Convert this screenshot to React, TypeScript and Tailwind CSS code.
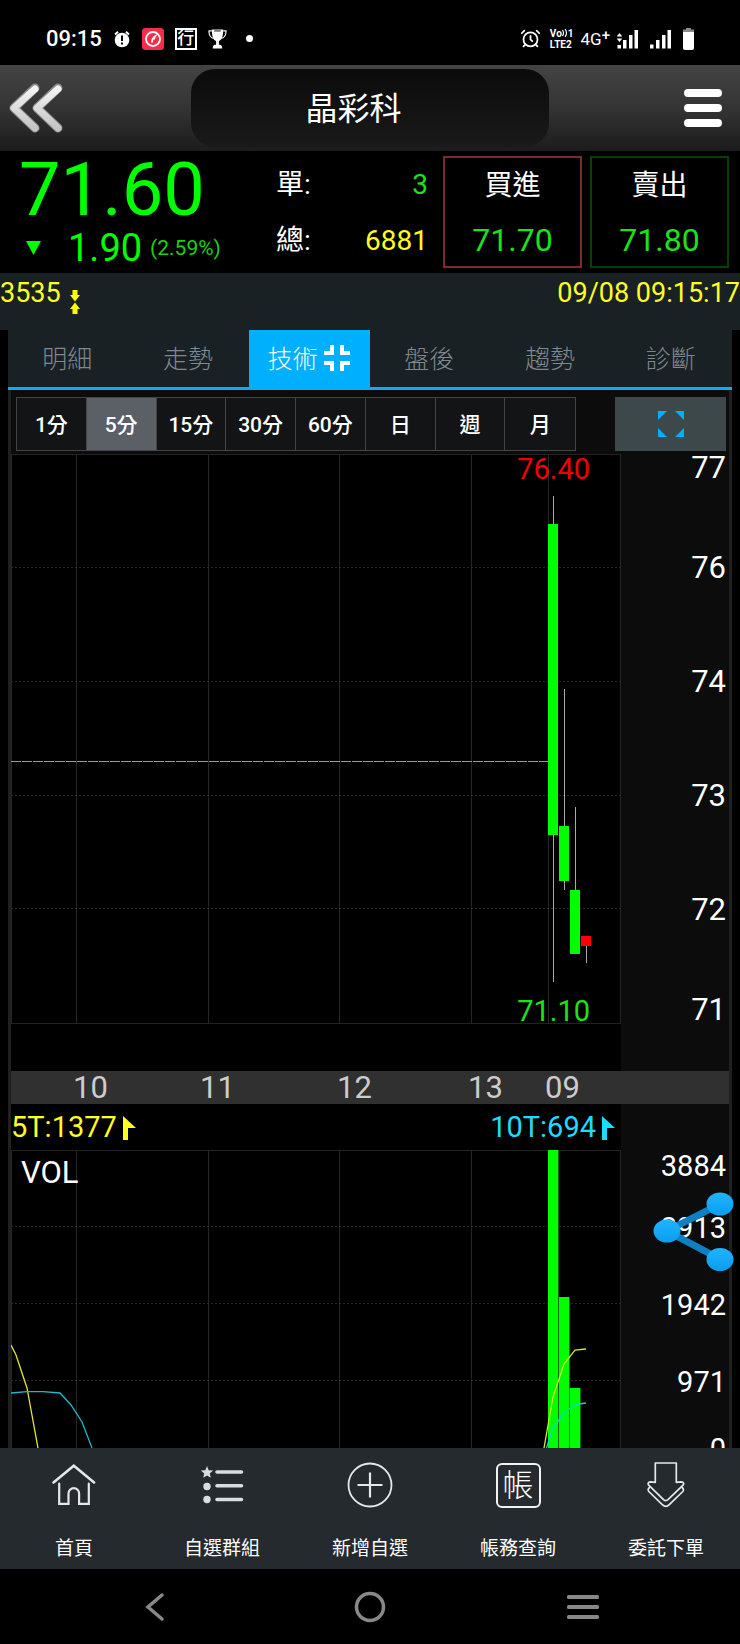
import React from 'react';
import { AlarmClock } from 'lucide-react';

const tabs = ['明細', '走勢', '技術', '盤後', '趨勢', '診斷'];
const periods = ['1分', '5分', '15分', '30分', '60分', '日', '週', '月'];
const hours = ['10', '11', '12', '13', '09'];

interface Candle {
  x: number;
  high: number;
  low: number;
  top: number;
  bottom: number;
  up?: boolean;
}

const candles: Candle[] = [
  { x: 537, high: 42, low: 528, top: 70, bottom: 381 },
  { x: 548, high: 235, low: 436, top: 372, bottom: 427 },
  { x: 559, high: 353, low: 500, top: 436, bottom: 500 },
  { x: 570, high: 482, low: 509, top: 482, bottom: 492, up: true },
];

const volumes = [
  { x: 537, top: 0 },
  { x: 548, top: 147 },
  { x: 559, top: 238 },
];

const GridLines = ({ rows, height, columns }: { rows: number[]; height: number; columns: number[] }) => (
  <g fill="none" strokeWidth="1" shapeRendering="crispEdges">
    {columns.map((x) => (
      <line key={x} x1={x} x2={x} y1="0" y2={height} stroke="#262626" />
    ))}
    {rows.map((y) => (
      <line key={y} x1="0" x2="610" y1={y} y2={y} stroke="#282828" strokeDasharray="2 2" />
    ))}
  </g>
);

const Signal = () => (
  <svg viewBox="0 0 21 20" className="h-5 w-[21px]" fill="#fff">
    <rect x="0" y="15.500" width="3.500" height="4" />
    <rect x="6" y="11" width="3.500" height="8.500" />
    <rect x="12" y="6" width="3.500" height="13.500" />
    <rect x="17.500" y="1" width="3.500" height="18.500" />
  </svg>
);

const StatusBar = () => (
  <div className="flex h-[65px] items-center justify-between bg-black pt-3 pr-[46px] pl-[46px] text-white">
    <div className="flex items-center gap-[11px]">
      <span className="text-[22px] leading-6 font-medium">09:15</span>
      <svg viewBox="0 0 18 18" className="size-[18px]" fill="#fff">
        <circle cx="9" cy="10" r="7.300" />
        <path d="M2 4.500 5 1.800M16 4.500 13 1.800" stroke="#fff" strokeWidth="2" />
        <path d="M9 5.500v5.500M9 12.500v2" stroke="#000" strokeWidth="2" />
      </svg>
      <svg viewBox="0 0 22 22" className="size-[22px]">
        <rect width="22" height="22" rx="3.500" fill="#f72b4a" />
        <circle cx="11" cy="11" r="7" fill="none" stroke="#fff" strokeWidth="1.800" />
        <path d="M10 14.500c0-3 .5-5 3.500-6.500l-2 3.500" fill="none" stroke="#fff" strokeWidth="1.800" />
      </svg>
      <span className="flex size-[22px] items-center justify-center border-2 border-white text-[17px] leading-none font-medium">行</span>
      <svg viewBox="0 0 20 22" className="h-[22px] w-[19px]" fill="#fff">
        <path d="M4 1h12c0 7-1.500 11-4.500 12.200V17h1.500c1.500.6 2 2 2 4H5c0-2 .5-3.400 2-4h1.500v-3.800C5.500 12 4 8 4 1Z" />
        <path d="M4 2.500H1c0 4.500 1.500 7 5 8M16 2.500h3c0 4.500-1.500 7-5 8" fill="none" stroke="#fff" strokeWidth="1.200" />
        <path d="M6.500 2.500h7" stroke="#000" strokeWidth="1" />
      </svg>
      <span className="ml-2 size-[7px] rounded-full bg-white" />
    </div>
    <div className="flex items-center gap-3">
      <div className="flex items-center gap-[7px]">
        <AlarmClock className="mr-[2px] size-[21px]" strokeWidth={2} />
        <div className="flex flex-col text-[10px] leading-[11px] font-bold">
          <span className="flex items-center">
            Vo
            <svg viewBox="0 0 6 10" className="h-[10px] w-[6px]" fill="none" stroke="#fff">
              <path d="M.5 2q2 3 0 6M3 1q3 4 0 8" strokeWidth="1.200" />
            </svg>
            1
          </span>
          <span>LTE2</span>
        </div>
        <span className="flex items-start text-[17px] leading-5">
          4G<span className="text-[15px] leading-3 font-medium">+</span>
        </span>
        <svg viewBox="0 0 21 20" className="h-5 w-[21px]" fill="#fff">
          <path d="m2.500 4 2.800 3.500h-5.600zM2.500 13 -.3 9.500h5.600z" />
          <rect x="0.500" y="16" width="3.500" height="3.500" />
          <rect x="6" y="11" width="3.500" height="8.500" />
          <rect x="12" y="6" width="3.500" height="13.500" />
          <rect x="17.500" y="1" width="3.500" height="18.500" />
        </svg>
      </div>
      <Signal />
      <svg viewBox="0 0 11 22" className="h-[22px] w-[11px]">
        <path d="M3 0h5v1.500h3V5H0V1.500h3z" fill="#8a8a8a" />
        <path d="M0 4h11v16a2 2 0 0 1-2 2H2a2 2 0 0 1-2-2z" fill="#fff" />
      </svg>
    </div>
  </div>
);

const Header = () => (
  <header className="grid h-[86px] grid-cols-[1fr_358px_1fr] items-center bg-linear-to-b from-[#444] via-[#343434] to-[#1c1c1c]">
    <button type="button" aria-label="返回" className="justify-self-start pl-[9px]">
      <svg viewBox="0 0 54 50" className="h-[50px] w-[54px]" fill="none" strokeLinecap="round" strokeLinejoin="round">
        <defs>
          <linearGradient id="back" x1="0" y1="0" x2="0" y2="1">
            <stop offset="0" stopColor="#f4f4f4" />
            <stop offset="1" stopColor="#c4c4c4" />
          </linearGradient>
        </defs>
        <path d="M26 5 5 25l21 20M49 5 28 25l21 20" stroke="#8c8c8c" strokeWidth="9" />
        <path d="M26 6 5 25l21 20M49 6 28 25l21 20" stroke="url(#back)" strokeWidth="7" />
      </svg>
    </button>
    <h1 className="flex h-[78px] items-center justify-center rounded-3xl bg-linear-to-b from-[#0b0b0b] via-[#121212] to-[#1a1a1a] pt-[1px] pr-[33px] text-[32px] text-white">
      晶彩科
    </h1>
    <button type="button" aria-label="選單" className="justify-self-end pr-[18px]">
      <svg viewBox="0 0 38 38" className="size-[38px]" fill="#fff">
        <rect y="0" width="38" height="8" rx="4" />
        <rect y="15" width="38" height="8" rx="4" />
        <rect y="30" width="38" height="8" rx="4" />
      </svg>
    </button>
  </header>
);

const Quote = () => (
  <section className="grid h-[122px] grid-cols-[1fr_152px_154px_147px] bg-black pt-[5px] pr-[11px]">
    <div className="text-[#00ff00]">
      <div className="pl-[19px] text-[74px] leading-[68px]">71.60</div>
      <div className="flex items-center pl-[26px]">
        <svg viewBox="0 0 15 14" className="mr-[27px] h-[14px] w-[15px]" fill="#00ff00">
          <path d="M0 0h15L7.500 14z" />
        </svg>
        <span className="text-[38px] leading-[48px]">1.90</span>
        <span className="ml-2 text-[21px] leading-[44px] text-[#18d018]">(2.59%)</span>
      </div>
    </div>
    <dl className="grid grid-cols-[auto_1fr] grid-rows-[56px_56px] pt-[1px] text-[28px] leading-[56px] text-white">
      <dt>單:</dt>
      <dd className="text-right text-[#1ee01e]">3</dd>
      <dt>總:</dt>
      <dd className="text-right text-[#ffff22]">6881</dd>
    </dl>
    <button type="button" className="flex h-28 w-[139px] flex-col items-center justify-self-end border-2 border-[#7c2c2c] text-white">
      <span className="text-[28px] leading-[56px]">買進</span>
      <span className="text-[32px] leading-[52px] text-[#1ee01e]">71.70</span>
    </button>
    <button type="button" className="flex h-28 w-[139px] flex-col items-center justify-self-end border-2 border-[#064006] text-white">
      <span className="text-[28px] leading-[56px]">賣出</span>
      <span className="text-[32px] leading-[52px] text-[#1ee01e]">71.80</span>
    </button>
  </section>
);

const InfoStrip = () => (
  <div className="flex h-[57px] items-start justify-between bg-[#1a2125] text-[27px] leading-10 text-[#ffff22]">
    <div className="flex gap-[9px]">
      <span>3535</span>
      <svg viewBox="0 0 10 24" className="mt-[17px] h-6 w-[10px]" fill="#ffff00">
        <path d="M2.500 0h5v5H10l-5 6.500L0 5h2.500zM2.500 24h5v-5H10l-5-6.500L0 19h2.500z" />
      </svg>
    </div>
    <time>09/08 09:15:17</time>
  </div>
);

const Tabs = () => (
  <nav className="mx-2 grid grid-cols-6 border-b-[3px] border-[#12aaf0] bg-[#1a2125]">
    {tabs.map((tab) => {
      const active = tab === '技術';
      return (
        <button
          key={tab}
          type="button"
          className={`flex h-[57px] items-center justify-center gap-[6px] pt-[3px] pr-[2px] text-[25px] font-light ${active ? 'bg-[#00b0ff] text-white' : 'text-[#7f898c]'}`}
        >
          {tab}
          {active && (
            <svg viewBox="0 0 26 26" className="mb-1 size-[26px]" fill="none" stroke="#fff" strokeWidth="4">
              <path d="M8 0v8H0M18 0v8h8M8 26v-8H0M18 26v-8h8" />
            </svg>
          )}
        </button>
      );
    })}
  </nav>
);

const Toolbar = () => (
  <div className="flex gap-[39px] bg-[#0c0c0c] pt-[7px] pr-[3px] pb-[3px] pl-[5px]">
    <div className="grid h-[54px] flex-1 grid-cols-8 divide-x divide-[#444] border border-[#444] bg-[#121415]">
      {periods.map((period) => (
        <button
          key={period}
          type="button"
          className={`pt-[3px] text-[21px] font-medium text-white ${period === '5分' ? 'bg-[#5b6067]' : ''}`}
        >
          {period}
        </button>
      ))}
    </div>
    <button type="button" aria-label="全螢幕" className="flex h-[54px] w-[111px] items-center justify-center bg-[#3d484b]">
      <svg viewBox="0 0 26 26" className="size-[26px]" fill="#00b0ff">
        <path d="M0 0h9L0 9zM26 0v9l-9-9zM0 26v-9l9 9zM26 26h-9l9-9z" />
      </svg>
    </button>
  </div>
);

const PriceChart = () => (
  <div className="grid grid-cols-[1fr_108px]">
    <div className="relative bg-black pb-[47px]">
      <svg viewBox="0 0 610 570" preserveAspectRatio="none" className="block h-[570px] w-full">
        <GridLines rows={[113.5, 227.5, 341.5, 454.5]} columns={[0.5, 65.5, 197.5, 328.5, 460.5, 537.5, 609.5]} height={570} />
        <path d="M0 .5h610M0 569.500h610" stroke="#222" />
        <path d="M0 307.500h537" stroke="#999" strokeDasharray="10 1" />
        {candles.map((c) => (
          <g key={c.x}>
            <path d={`M${c.x + 5.5} ${c.high}V${c.low}`} stroke="#aaa" />
            <rect x={c.x} y={c.top} width="10" height={c.bottom - c.top} fill={c.up ? '#ff0000' : '#00ff00'} />
          </g>
        ))}
      </svg>
      <span className="absolute top-0 right-[31px] text-[29px] leading-[30px] text-[#f00000]">76.40</span>
      <span className="absolute right-[31px] bottom-[45px] text-[29px] leading-[30px] text-[#1ee01e]">71.10</span>
    </div>
    <div className="flex flex-col items-end bg-[#0c0c0c] pr-[3px] text-[31px] leading-7 text-white">
      <span className="h-[57px]">77</span>
      <span className="flex h-[114px] items-center">76</span>
      <span className="flex h-[114px] items-center">74</span>
      <span className="flex h-[114px] items-center">73</span>
      <span className="flex h-[114px] items-center">72</span>
      <span className="flex h-[57px] items-end">71</span>
    </div>
  </div>
);

const TimeAxis = () => (
  <div className="grid grid-cols-[1fr_108px] bg-[#303030]">
    <div className="grid grid-cols-[62fr_127fr_137fr_131fr_77fr_76fr] text-[31px] leading-[33px] text-[#ccc]">
      <span />
      {hours.map((hour) => (
        <span key={hour}>{hour}</span>
      ))}
    </div>
  </div>
);

const Flag = () => (
  <svg viewBox="0 0 13 24" className="h-6 w-[13px]" fill="currentColor">
    <path d="M0 0 13 12H5v12H0z" />
  </svg>
);

const Legend = () => (
  <div className="grid grid-cols-[1fr_108px] bg-[#0c0c0c]">
    <div className="flex justify-between bg-black pt-[1px] pr-[6px] text-[29px] leading-[45px]">
      <span className="flex items-center gap-[6px] text-[#ffff22]">
        5T:1377
        <Flag />
      </span>
      <span className="flex items-center gap-[6px] text-[#1cdcff]">
        10T:694
        <Flag />
      </span>
    </div>
  </div>
);

const VolumeChart = () => (
  <div className="relative grid h-[298px] grid-cols-[1fr_108px]">
    <div className="relative bg-black">
      <svg viewBox="0 0 610 298" preserveAspectRatio="none" className="block h-[298px] w-full">
        <GridLines rows={[76.5, 153.5, 230.5]} columns={[0.5, 65.5, 197.5, 328.5, 460.5, 609.5]} height={298} />
        <path d="M0 .5h610" stroke="#222" />
        {volumes.map((v) => (
          <rect key={v.x} x={v.x} y={v.top} width="10.400" height={298 - v.top} fill="#00ff00" />
        ))}
        <g fill="none" strokeWidth="1.300">
          <path d="M0 195 5 205 16 238 27 298" stroke="#e6e62e" />
          <path d="M533 298 542 247 553 214 564 200 575 199" stroke="#d8e820" />
          <path d="M0 243 16 241.700H32L49 243 60 255 71 272 81 298" stroke="#20b8cc" />
          <path d="M535.500 298 542 278 553 263 564 254.500 575 253" stroke="#00e0c0" />
        </g>
      </svg>
      <span className="absolute top-[7px] left-[10px] text-[31px] leading-8 text-white">VOL</span>
    </div>
    <div className="flex flex-col items-end overflow-hidden bg-[#0c0c0c] pt-[1px] pr-[3px] text-[29px] leading-[30px] text-white">
      <span className="h-[38px] shrink-0">3884</span>
      <span className="flex h-[77px] shrink-0 items-center">2913</span>
      <span className="flex h-[77px] shrink-0 items-center">1942</span>
      <span className="flex h-[77px] shrink-0 items-center">971</span>
      <span className="flex h-[58px] shrink-0 items-center">0</span>
    </div>
    <button type="button" aria-label="分享" className="absolute top-[42px] right-[-5px]">
      <svg viewBox="0 0 81 80" className="h-20 w-[81px]">
        <defs>
          <linearGradient id="share" x1="0" y1="0" x2="0" y2="1">
            <stop offset="0" stopColor="#1fb4ff" />
            <stop offset="1" stopColor="#0a9df0" />
          </linearGradient>
        </defs>
        <path d="M67 12 14 39l53 28" fill="none" stroke="#0f7fc4" strokeWidth="7" />
        <ellipse cx="14" cy="39" rx="13.500" ry="11.500" fill="url(#share)" />
        <ellipse cx="67" cy="12" rx="13.500" ry="11.500" fill="url(#share)" />
        <ellipse cx="67" cy="67.500" rx="13.500" ry="11.500" fill="url(#share)" />
      </svg>
    </button>
  </div>
);

const navItems = [
  {
    label: '首頁',
    icon: (
      <svg viewBox="0 0 44 42" className="h-[42px] w-11" fill="none" stroke="#e4e8ea" strokeLinecap="round">
        <path d="M1.500 18.500 21.800 1.700l20.300 16.800" strokeWidth="2.500" />
        <path d="M7.200 19.500v20.300h9.300V29.500a5.300 5.300 0 0 1 10.600 0v10.300h9.700V19.500" strokeWidth="2.200" />
      </svg>
    ),
  },
  {
    label: '自選群組',
    icon: (
      <svg viewBox="0 0 44 40" className="h-10 w-11" fill="#d8dde0">
        <path d="m7 1 1.700 4.200 4.500.3-3.500 2.900 1.100 4.400L7 10.400l-3.800 2.400 1.100-4.400L.8 5.500l4.500-.3z" />
        <circle cx="7" cy="21.500" r="3.700" />
        <circle cx="7" cy="34.500" r="3.700" />
        <path d="M17 7h24.500M17 20.700h24.500M17 34.500h24.500" stroke="#d8dde0" strokeWidth="3.600" strokeLinecap="round" />
      </svg>
    ),
  },
  {
    label: '新增自選',
    icon: (
      <svg viewBox="0 0 46 46" className="size-[46px]" fill="none" stroke="#e4e8ea" strokeWidth="1.800">
        <circle cx="23" cy="23" r="21.500" />
        <path d="M10.500 23h25M23 10.500v25" strokeWidth="2.200" />
      </svg>
    ),
  },
  {
    label: '帳務查詢',
    icon: (
      <span className="flex size-[45px] items-center justify-center rounded-md border-2 border-[#f0f3f4] text-[31px] leading-none font-light">
        帳
      </span>
    ),
  },
  {
    label: '委託下單',
    icon: (
      <svg viewBox="0 0 38 46" className="h-[46px] w-[38px]" fill="none" stroke="#e4e8ea" strokeWidth="1.700" strokeLinejoin="round" strokeLinecap="round">
        <path d="M8.300 1h21v19.300l4.700-.5c2 0 3.300 1.500 2.300 3L21 37.700c-1.600 1.300-3 1.300-4.500 0L1.500 22.800c-1-1.500.2-3 2.200-3l4.600.5z" />
        <path d="M2.500 25.500C.8 27 .8 28.500 1.800 29.500l13.500 13.200c2.200 2.200 4.800 2.200 7 0l13.500-13.200c1-1 1-2.500-.7-4" />
      </svg>
    ),
  },
];

const BottomNav = () => (
  <nav className="grid grid-cols-5 bg-[#242a2e] text-white">
    {navItems.map(({ label, icon }) => (
      <a key={label} href="#" className="flex flex-col items-center gap-[27px] pt-[14px] pb-[6px]">
        <span className="flex h-[46px] items-center">{icon}</span>
        <span className="text-[19px] leading-7">{label}</span>
      </a>
    ))}
  </nav>
);

const SystemNav = () => (
  <div className="grid h-[75px] grid-cols-3 items-center justify-items-center bg-black px-[50px]">
    <button type="button" aria-label="上一頁" className="pr-1">
      <svg viewBox="0 0 20 30" className="h-[30px] w-5" fill="none" stroke="#888" strokeWidth="3.500" strokeLinecap="round">
        <path d="M17 3 3 15l14 12" />
      </svg>
    </button>
    <button type="button" aria-label="主畫面">
      <svg viewBox="0 0 32 32" className="size-8" fill="none" stroke="#888" strokeWidth="3.500">
        <circle cx="16" cy="16" r="13.500" />
      </svg>
    </button>
    <button type="button" aria-label="最近使用">
      <svg viewBox="0 0 32 26" className="h-[26px] w-8" fill="#888">
        <rect y="1" width="32" height="4" rx="1.500" />
        <rect y="11" width="32" height="4" rx="1.500" />
        <rect y="21" width="32" height="4" rx="1.500" />
      </svg>
    </button>
  </div>
);

export default function App() {
  return (
    <div className="bg-black font-['Roboto','Noto_Sans_CJK_TC',sans-serif]">
      <StatusBar />
      <Header />
      <Quote />
      <InfoStrip />
      <Tabs />
      <main className="mx-2 border-x-[3px] border-[#202020]">
        <Toolbar />
        <PriceChart />
        <TimeAxis />
        <Legend />
        <VolumeChart />
      </main>
      <BottomNav />
      <SystemNav />
    </div>
  );
}
